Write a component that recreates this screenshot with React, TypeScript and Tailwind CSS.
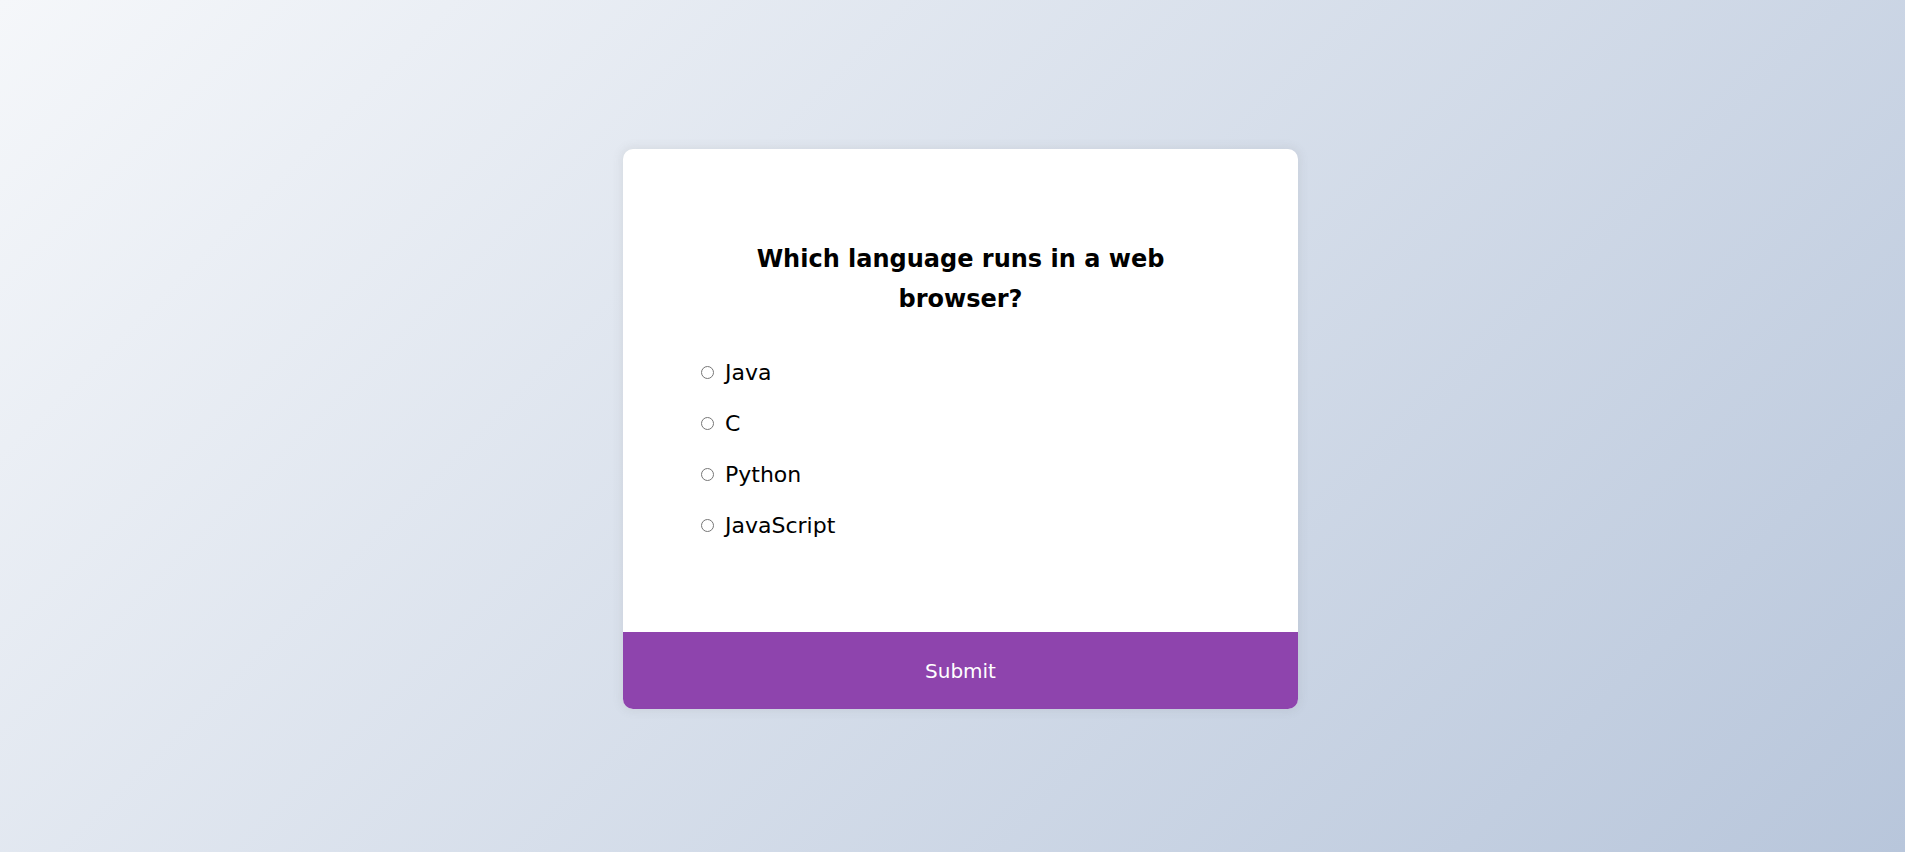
import { useState } from 'react';

const options = ['Java', 'C', 'Python', 'JavaScript'];

export default function App() {
  const [picked, setPicked] = useState<string | null>(null);

  return (
    <div
      className="h-screen w-full pt-[6px] pl-[16px] flex items-center justify-center overflow-hidden bg-[linear-gradient(135deg,#f5f7fa_0%,#b8c6db_100%)]"
      style={{ fontFamily: '"DejaVu Sans", "Noto Sans", sans-serif' }}
    >
      <div className="w-[675px] bg-white rounded-[10px] overflow-hidden shadow-[0_0_10px_2px_rgba(100,100,100,0.1)]">
        <div className="px-[78px] pt-[90px] pb-[92px]">
          <h2 className="mx-auto max-w-[470px] text-center text-[24px] leading-[40px] font-semibold text-black">
            Which language runs in a web browser?
          </h2>

          <ul className="mt-[39px] flex flex-col gap-[22px]">
            {options.map((opt) => (
              <li key={opt} className="h-[29px] flex items-center">
                <label className="flex items-center gap-[11px] cursor-pointer text-[22px] text-black">
                  <input
                    type="radio"
                    name="answer"
                    className="m-0 w-[13px] h-[13px]"
                    checked={picked === opt}
                    onChange={() => setPicked(opt)}
                  />
                  {opt}
                </label>
              </li>
            ))}
          </ul>
        </div>

        <button className="block w-full h-[77px] bg-[#8e44ad] text-white text-[20px] cursor-pointer">
          Submit
        </button>
      </div>
    </div>
  );
}
